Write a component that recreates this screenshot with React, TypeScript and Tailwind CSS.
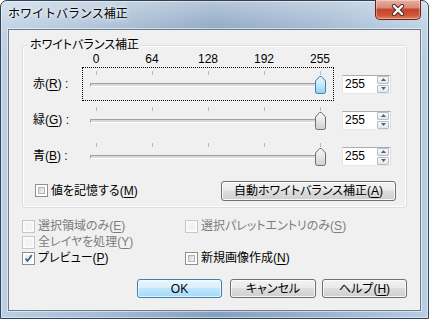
import React from "react";

const TICKS = [0, 64, 128, 192, 255];

const CHANNELS = [
  { name: "赤", key: "R", value: 255, focused: true },
  { name: "緑", key: "G", value: 255, focused: false },
  { name: "青", key: "B", value: 255, focused: false },
];

function Mn({ label, k }: { label: string; k: string }) {
  return (
    <>
      {label}(<u className="underline-offset-[2px]">{k}</u>)
    </>
  );
}

function CloseButton() {
  return (
    <div className="-mt-[1px] ml-auto flex h-[20px] w-[46px] items-center justify-center rounded-b-[5px] border border-t-0 border-[#6b2216] bg-[linear-gradient(180deg,#eab1a4_0%,#d98a79_40%,#c5442c_50%,#cf5637_80%,#e0845f_100%)] shadow-[inset_0_0_0_1px_rgba(255,255,255,0.35)]">
      <svg width="14" height="12" viewBox="0 0 14 12">
        <path d="M3 2 L11 10 M11 2 L3 10" stroke="#4a2a26" strokeWidth="4.2" strokeLinecap="round" />
        <path d="M3 2 L11 10 M11 2 L3 10" stroke="#fff" strokeWidth="2.4" strokeLinecap="round" />
      </svg>
    </div>
  );
}

function Thumb({ active, value }: { active: boolean; value: number }) {
  const id = active ? "thumb-blue" : "thumb-gray";
  const left = 13 + Math.round((value / 255) * 224) - 5;
  return (
    <svg
      width="11"
      height="18"
      viewBox="0 0 11 18"
      className="absolute top-[8px]"
      style={{ left }}
    >
      <defs>
        <linearGradient id={id} x1="0" y1="0" x2="0" y2="1">
          {active ? (
            <>
              <stop offset="0" stopColor="#e8f6fd" />
              <stop offset="0.5" stopColor="#c4e8fa" />
              <stop offset="1" stopColor="#8fd2f2" />
            </>
          ) : (
            <>
              <stop offset="0" stopColor="#f6f6f6" />
              <stop offset="0.5" stopColor="#e6e6e6" />
              <stop offset="1" stopColor="#cfcfcf" />
            </>
          )}
        </linearGradient>
      </defs>
      <path
        d="M0.5 5 L4.5 0.5 H6.5 L10.5 5 V15.5 Q10.5 17.5 8.5 17.5 H2.5 Q0.5 17.5 0.5 15.5 Z"
        fill={`url(#${id})`}
        stroke={active ? "#3c7fb1" : "#707070"}
      />
    </svg>
  );
}

function Slider({ value, focused }: { value: number; focused: boolean }) {
  return (
    <div
      className={`relative flex h-[34px] w-[252px] flex-col border border-dotted ${
        focused ? "border-black" : "border-transparent"
      }`}
    >
      <div className="mt-[3px] flex h-[4px] gap-[55px] pl-[13px]">
        {TICKS.map((t) => (
          <span key={t} className="h-[4px] w-[1px] bg-[#b9b9b9]" />
        ))}
      </div>
      <div className="ml-[7px] mt-[8px] h-[4px] w-[236px] border-b border-l border-t border-b-white border-l-[#a0a0a0] border-t-[#a0a0a0] bg-[#d9d9d9]" />
      <Thumb active={focused} value={value} />
    </div>
  );
}

function SpinButton({ up }: { up?: boolean }) {
  return (
    <div className="flex h-[8px] w-[12px] items-center justify-center rounded-[1px] border border-[#b6bcc4] bg-[linear-gradient(180deg,#fbfbfb,#e4e6e9)]">
      <svg width="5" height="3" viewBox="0 0 5 3">
        <path d={up ? "M0 3 L2.5 0 L5 3 Z" : "M0 0 L2.5 3 L5 0 Z"} fill="#4d6185" />
      </svg>
    </div>
  );
}

function Spin({ value }: { value: number }) {
  return (
    <div className="ml-[8px] flex h-[19px] w-[49px] items-center border border-[#abadb3] border-b-[#e3e9ef] border-l-[#e2e3ea] border-r-[#dbdfe6] bg-white">
      <span className="flex-1 pl-[2px] text-[12px] leading-[17px] text-black">{value}</span>
      <div className="mr-[1px] flex flex-col gap-[1px]">
        <SpinButton up />
        <SpinButton />
      </div>
    </div>
  );
}

function CheckBox({ checked, disabled }: { checked?: boolean; disabled?: boolean }) {
  return (
    <span
      className={`relative flex h-[13px] w-[13px] shrink-0 border p-[2px] ${
        disabled ? "border-[#c8c8c8] bg-[#fafafa]" : "border-[#8f8f8f] bg-white"
      }`}
    >
      <span
        className={`flex-1 ${
          disabled
            ? "bg-[#f2f2f2]"
            : checked
            ? "bg-[linear-gradient(135deg,#e4e6ea,#fafafa)]"
            : "border border-[#b0b4ba] bg-[linear-gradient(135deg,#cfd3d8,#f7f7f8)]"
        }`}
      />
      {checked && (
        <svg width="11" height="11" viewBox="0 0 11 11" className="absolute left-[0px] top-[0px]">
          <path d="M2.5 5.5 L4.5 8 L8.8 2" fill="none" stroke="#4a5f97" strokeWidth="1.8" />
        </svg>
      )}
    </span>
  );
}

function Check({
  label,
  k,
  checked,
  disabled,
}: {
  label: string;
  k: string;
  checked?: boolean;
  disabled?: boolean;
}) {
  return (
    <div className={`flex h-[16px] items-center gap-[3px] ${disabled ? "text-[#7d7d7d]" : "text-black"}`}>
      <CheckBox checked={checked} disabled={disabled} />
      <span className="whitespace-nowrap">
        <Mn label={label} k={k} />
      </span>
    </div>
  );
}

function Button({ children, def, className = "" }: { children: React.ReactNode; def?: boolean; className?: string }) {
  return (
    <button
      className={`flex h-[19px] items-center justify-center rounded-[3px] border text-[12px] leading-[14px] text-black ${
        def
          ? "border-[#3c7fb1] bg-[linear-gradient(180deg,#eaf6fd_0%,#d9f0fc_45%,#bee6fd_50%,#a7d9f5_100%)] shadow-[inset_0_0_0_1px_rgba(255,255,255,0.7)]"
          : "border-[#707070] bg-[linear-gradient(180deg,#f2f2f2_0%,#ebebeb_45%,#dddddd_50%,#cfcfcf_100%)] shadow-[inset_0_0_0_1px_rgba(255,255,255,0.8)]"
      } ${className}`}
    >
      {children}
    </button>
  );
}

export default function App() {
  return (
    <div className="h-[319px] w-[429px] bg-white font-['Liberation_Sans','Noto_Sans_CJK_JP',sans-serif] text-[12px] leading-[14px]">
      <div className="flex h-full w-full flex-col rounded-t-[7px] border border-[#2f4258] bg-[linear-gradient(180deg,rgba(255,255,255,0.4)_0%,rgba(255,255,255,0.1)_9%,rgba(255,255,255,0)_20%),linear-gradient(90deg,#bccfe3_0%,#a0b8d1_28%,#86a1bf_50%,#9ab3ce_75%,#b9cde3_100%)] px-[7px] pb-[7px] shadow-[inset_0_0_0_1px_rgba(255,255,255,0.45)]">
        {/* title bar */}
        <div className="flex h-[28px] shrink-0 items-start">
          <span className="mt-[6px] text-[12px] leading-[14px] text-black [text-shadow:0_0_6px_#fff,0_0_3px_#fff]">
            ホワイトバランス補正
          </span>
          <CloseButton />
        </div>

        {/* client area */}
        <div className="flex flex-1 flex-col border border-[#6c7d91] bg-[#f0f0f0] px-[13px] text-black shadow-[0_0_0_1px_rgba(255,255,255,0.5)] [font-feature-settings:'palt']">
          <div className="relative mt-[15px] flex flex-col rounded-[3px] border border-[#d5dfe5] pb-[6px] pl-[10px] pr-[10px] shadow-[inset_0_0_0_1px_#fff]">
            <span className="absolute -top-[8px] left-[5px] bg-[#f0f0f0] px-[2px]">ホワイトバランス補正</span>

            <div className="mt-[6px] flex h-[14px] gap-[36px] pl-[53px]">
              {TICKS.map((t) => (
                <span key={t} className="w-[20px] text-center">
                  {t}
                </span>
              ))}
            </div>

            <div className="mt-[1px] flex flex-col gap-[2px]">
              {CHANNELS.map((c) => (
                <div key={c.key} className="flex items-center">
                  <span className="w-[49px] whitespace-nowrap">
                    <Mn label={c.name} k={c.key} /> :
                  </span>
                  <Slider value={c.value} focused={c.focused} />
                  <Spin value={c.value} />
                </div>
              ))}
            </div>

            <div className="mt-[7px] flex h-[21px] items-center">
              <div className="ml-[2px]">
                <Check label="値を記憶する" k="M" />
              </div>
              <Button className="ml-auto h-[20px] w-[175px]">
                <Mn label="自動ホワイトバランス補正" k="A" />
              </Button>
            </div>
          </div>

          <div className="mt-[10px] grid grid-cols-[163px_1fr]">
            <Check label="選択領域のみ" k="E" disabled />
            <Check label="選択パレットエントリのみ" k="S" disabled />
            <Check label="全レイヤを処理" k="Y" disabled />
            <div />
            <Check label="プレビュー" k="P" checked />
            <Check label="新規画像作成" k="N" />
          </div>

          <div className="mt-[13px] flex justify-end">
            <Button def className="w-[85px]">
              OK
            </Button>
            <Button className="ml-[8px] w-[86px]">キャンセル</Button>
            <Button className="ml-[6px] w-[85px]">
              <Mn label="ヘルプ" k="H" />
            </Button>
          </div>
        </div>
      </div>
    </div>
  );
}
